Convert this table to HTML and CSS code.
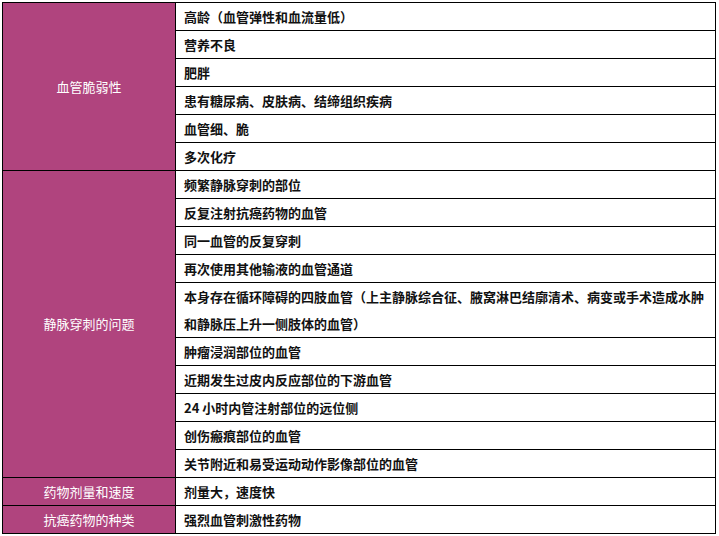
FILE: index.html
```html
<!DOCTYPE html>
<html lang="zh-CN">
<head>
<meta charset="utf-8">
<link rel="stylesheet" href="styles.css">
</head>
<body>
<table class="risk">
  <colgroup><col class="c1"><col class="c2"></colgroup>
  <tr><td class="cat" rowspan="6">血管脆弱性</td><td class="item">高龄（血管弹性和血流量低）</td></tr>
  <tr><td class="item">营养不良</td></tr>
  <tr><td class="item">肥胖</td></tr>
  <tr><td class="item">患有糖尿病、皮肤病、结缔组织疾病</td></tr>
  <tr><td class="item">血管细、脆</td></tr>
  <tr><td class="item">多次化疗</td></tr>
  <tr><td class="cat" rowspan="10">静脉穿刺的问题</td><td class="item">频繁静脉穿刺的部位</td></tr>
  <tr><td class="item">反复注射抗癌药物的血管</td></tr>
  <tr><td class="item">同一血管的反复穿刺</td></tr>
  <tr><td class="item">再次使用其他输液的血管通道</td></tr>
  <tr><td class="item two">本身存在循环障碍的四肢血管（上主静脉综合征、腋窝淋巴结廓清术、病变或手术造成水肿<br>和静脉压上升一侧肢体的血管）</td></tr>
  <tr><td class="item">肿瘤浸润部位的血管</td></tr>
  <tr><td class="item">近期发生过皮内反应部位的下游血管</td></tr>
  <tr><td class="item">24 小时内管注射部位的远位侧</td></tr>
  <tr><td class="item">创伤瘢痕部位的血管</td></tr>
  <tr><td class="item">关节附近和易受运动动作影像部位的血管</td></tr>
  <tr><td class="cat">药物剂量和速度</td><td class="item">剂量大，速度快</td></tr>
  <tr><td class="cat">抗癌药物的种类</td><td class="item">强烈血管刺激性药物</td></tr>
</table>
</body>
</html>
```

FILE: styles.css
```css
html, body {
  margin: 0;
  padding: 0;
  background: #ffffff;
}
body {
  padding: 2px 0 0 2px;
  font-family: "Noto Sans CJK SC", "Noto Sans", sans-serif;
  font-size: 13px;
}
.risk {
  border-collapse: collapse;
  width: 714px;
  table-layout: fixed;
  border: 1px solid #000;
}
.c1 { width: 173px; }
.risk td {
  border: 1px solid #000;
  padding: 0;
  height: 27px;
  line-height: 26px;
  vertical-align: middle;
}
.cat {
  background: #b0447e;
  color: #ffffff;
  text-align: center;
  font-weight: normal;
}
.item {
  color: #111111;
  font-weight: bold;
  padding-left: 8px !important;
  white-space: nowrap;
}
.risk td.two {
  height: 54px;
  line-height: 27px;
}
```
